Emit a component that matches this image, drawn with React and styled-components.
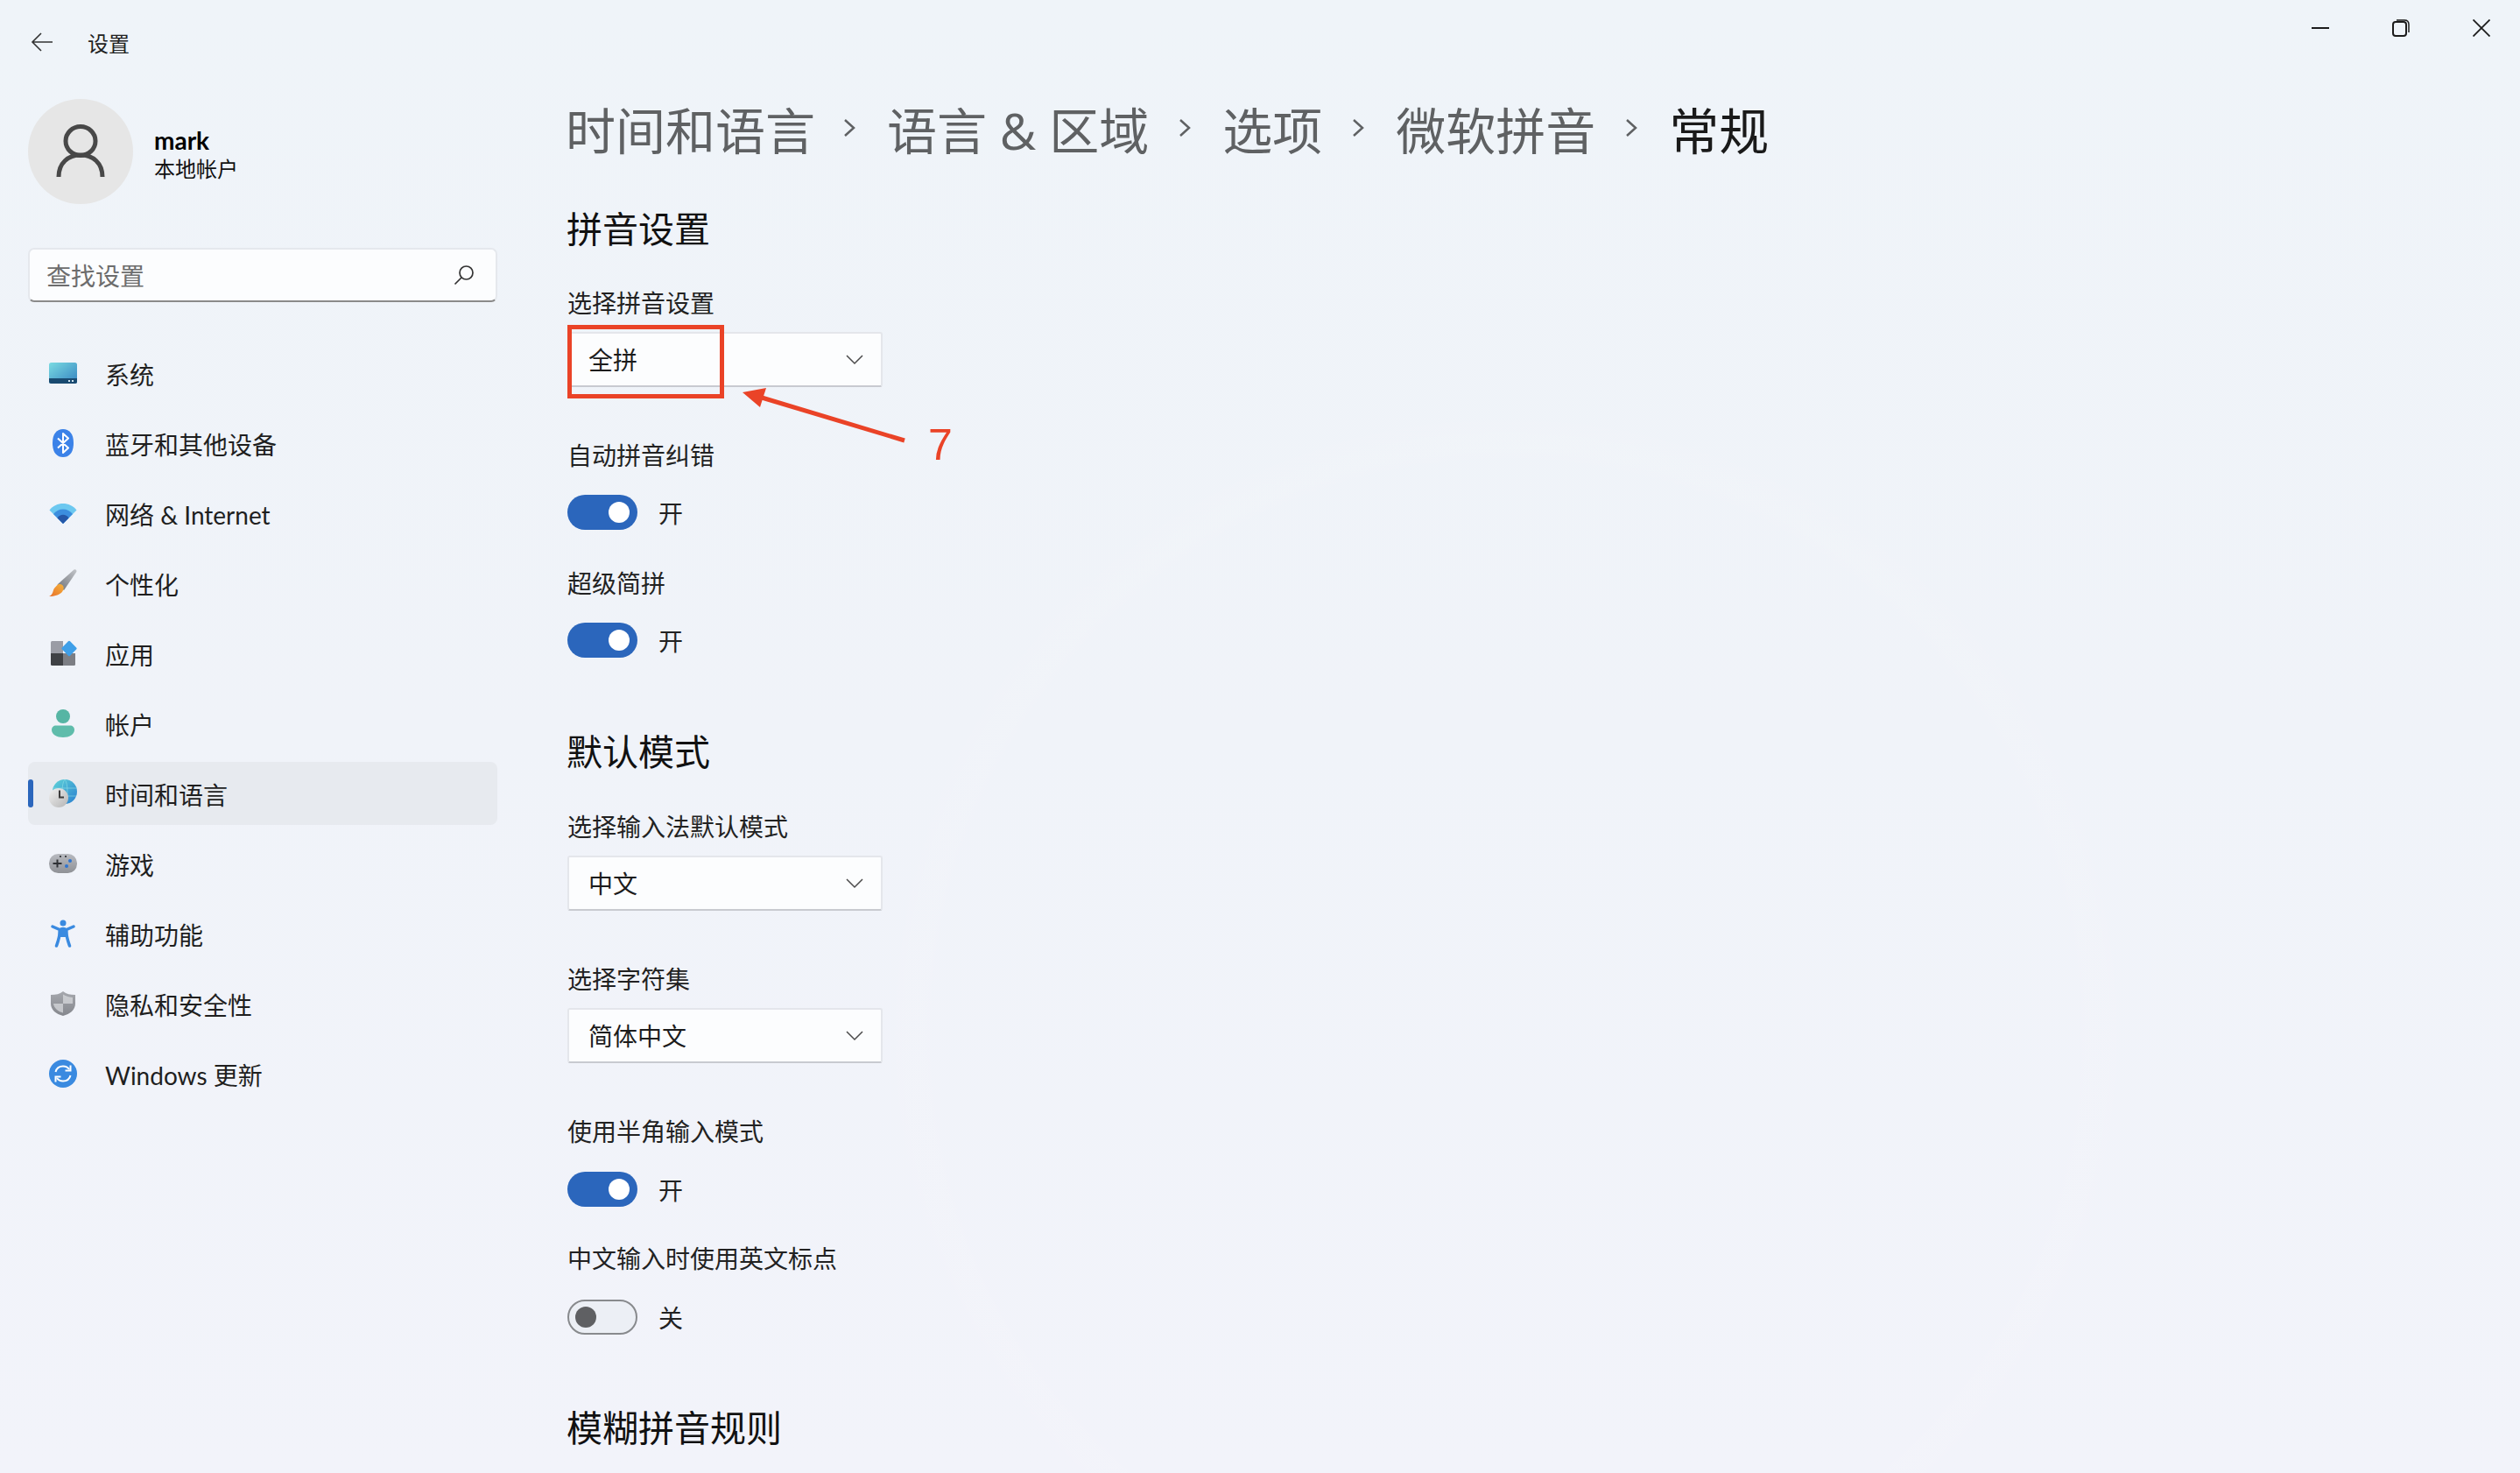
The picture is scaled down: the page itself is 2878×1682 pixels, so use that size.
import React from 'react';
import styled, { createGlobalStyle } from 'styled-components';

const GlobalStyle = createGlobalStyle`
  html, body {
    margin: 0;
    padding: 0;
  }
  body {
    font-family: "Open Sans", "Noto Sans CJK SC", sans-serif;
    color: #1c1c1c;
  }
`;

const navItems = [
  { key: 'system', label: '系统' },
  { key: 'bluetooth', label: '蓝牙和其他设备' },
  { key: 'network', label: '网络 & Internet' },
  { key: 'brush', label: '个性化' },
  { key: 'apps', label: '应用' },
  { key: 'account', label: '帐户' },
  { key: 'time', label: '时间和语言', active: true },
  { key: 'game', label: '游戏' },
  { key: 'access', label: '辅助功能' },
  { key: 'privacy', label: '隐私和安全性' },
  { key: 'update', label: 'Windows 更新' },
];

const crumbs = ['时间和语言', '语言 & 区域', '选项', '微软拼音'];

function NavIcon ({ name }) {
  switch (name) {
    case 'system':
      return (
        <svg width="32" height="32" viewBox="0 0 32 32">
          <defs>
            <linearGradient id="sysTop" x1="0" y1="0" x2="1" y2="1">
              <stop offset="0" stopColor="#7adbe2" />
              <stop offset="1" stopColor="#3583c0" />
            </linearGradient>
          </defs>
          <rect x="0" y="4" width="32" height="24" rx="2.5" fill="url(#sysTop)" />
          <path d="M0 22h32v3.5a2.5 2.5 0 0 1-2.5 2.5h-27A2.5 2.5 0 0 1 0 25.500z" fill="#194a70" />
          <rect x="22" y="24" width="2" height="2" fill="#cfe4ef" />
          <rect x="26" y="24" width="2" height="2" fill="#cfe4ef" />
        </svg>
      );
    case 'bluetooth':
      return (
        <svg width="32" height="32" viewBox="0 0 32 32">
          <path d="M16 0c7 0 12 5 12 16s-5 16-12 16S4 27 4 16 9 0 16 0z" fill="#3b82e8" />
          <path d="M10 10.500l12 11-6 5.500V5l6 5.500-12 11" fill="none" stroke="#fff" strokeWidth="2" strokeLinejoin="round" />
        </svg>
      );
    case 'network':
      return (
        <svg width="32" height="32" viewBox="0 0 32 32">
          <path d="M0.500 12.500C8 2.500 24 2.500 31.500 12.500L16 28z" fill="#6cc8f0" />
          <path d="M5 17C10 9.500 22 9.500 27 17L16 28z" fill="#3c8ede" />
          <path d="M9.500 21.500C12.500 16.500 19.500 16.500 22.500 21.500L16 28z" fill="#2557a7" />
        </svg>
      );
    case 'brush':
      return (
        <svg width="32" height="32" viewBox="0 0 32 32">
          <defs>
            <linearGradient id="brushHandle" x1="1" y1="0" x2="0" y2="1">
              <stop offset="0" stopColor="#c2c5ca" />
              <stop offset="1" stopColor="#6f7278" />
            </linearGradient>
            <linearGradient id="brushTip" x1="1" y1="0" x2="0" y2="1">
              <stop offset="0" stopColor="#f4b23c" />
              <stop offset="1" stopColor="#e8702a" />
            </linearGradient>
          </defs>
          <path d="M28.500 0.500c1.800-1 3.500.5 2.800 2.500L17 24l-7.500-6.500z" fill="url(#brushHandle)" />
          <path d="M9 18.500c2.500-2.500 6.500-1.500 7.500 1.500 1 4-2.500 11-16.500 11 3.500-1.500 4-4 5-7 .7-2.500 2.500-3.500 4-5.500z" fill="url(#brushTip)" />
        </svg>
      );
    case 'apps':
      return (
        <svg width="32" height="32" viewBox="0 0 32 32">
          <path d="M2 3.500A1.500 1.500 0 0 1 3.500 2H16v14H2z" fill="#9a9ca5" />
          <path d="M2 16h14v14H3.500A1.500 1.500 0 0 1 2 28.500z" fill="#3f4145" />
          <path d="M16 16h14v12.500a1.500 1.500 0 0 1-1.500 1.500H16z" fill="#7c7e84" />
          <rect x="16.500" y="4" width="13" height="13" rx="1.500" transform="rotate(45 23 10.500)" fill="#3f9fe8" />
        </svg>
      );
    case 'account':
      return (
        <svg width="32" height="32" viewBox="0 0 32 32">
          <circle cx="16" cy="8" r="8" fill="#56b5a4" />
          <path d="M3 23.500c0-3 2-5 5-5h16c3 0 5 2 5 5 0 5-6 8.500-13 8.500S3 28.500 3 23.500z" fill="#5fbcab" />
        </svg>
      );
    case 'time':
      return (
        <svg width="32" height="32" viewBox="0 0 32 32">
          <defs>
            <linearGradient id="globe" x1="0" y1="0" x2="1" y2="1">
              <stop offset="0" stopColor="#5fd4d8" />
              <stop offset="1" stopColor="#2a7fd0" />
            </linearGradient>
            <linearGradient id="clock" x1="0" y1="0" x2="1" y2="1">
              <stop offset="0" stopColor="#f2f2f2" />
              <stop offset="1" stopColor="#b4b4b4" />
            </linearGradient>
          </defs>
          <circle cx="18" cy="14" r="14" fill="url(#globe)" />
          <path d="M18 0c-4 4-4 24 0 28M18 0c4 4 4 24 0 28M4 10h28M5 19h26" fill="none" stroke="#8fdfe6" strokeWidth="1" opacity=".6" />
          <circle cx="11" cy="21" r="11" fill="url(#clock)" />
          <path d="M12 12.500V20.500h5" fill="none" stroke="#3c3c3c" strokeWidth="2" />
        </svg>
      );
    case 'game':
      return (
        <svg width="32" height="32" viewBox="0 0 32 32">
          <defs>
            <linearGradient id="pad" x1="0" y1="0" x2="0" y2="1">
              <stop offset="0" stopColor="#b8bac0" />
              <stop offset="1" stopColor="#8f9196" />
            </linearGradient>
          </defs>
          <rect x="0" y="5" width="32" height="22" rx="10.500" fill="url(#pad)" />
          <path d="M4.500 16h10M9.500 11.500v9" stroke="#303236" strokeWidth="2" />
          <circle cx="24" cy="13" r="2" fill="#2f74d0" />
          <circle cx="20" cy="19" r="2" fill="#2f74d0" />
          <rect x="12" y="7" width="2" height="2" fill="#44464a" />
          <rect x="18" y="7" width="2" height="2" fill="#44464a" />
        </svg>
      );
    case 'access':
      return (
        <svg width="32" height="32" viewBox="0 0 32 32">
          <circle cx="16" cy="4" r="3.500" fill="#3a8ae0" />
          <path d="M4 8l8 3.500h8L28 8" fill="none" stroke="#3a8ae0" strokeWidth="3.500" strokeLinecap="round" strokeLinejoin="round" />
          <path d="M16 10.500c-3 0-4 2-4 5 0 5-2 10-3.500 14.500M16 10.500c3 0 4 2 4 5 0 5 2 10 3.500 14.500" fill="none" stroke="#3a8ae0" strokeWidth="3.500" strokeLinecap="round" />
          <path d="M12.500 11h7v9h-7z" fill="#3a8ae0" />
        </svg>
      );
    case 'privacy':
      return (
        <svg width="32" height="32" viewBox="0 0 32 32">
          <defs>
            <linearGradient id="shield" x1="0" y1="0" x2="0" y2="1">
              <stop offset="0" stopColor="#a6a8ae" />
              <stop offset="1" stopColor="#85878d" />
            </linearGradient>
          </defs>
          <path d="M16 2c4 3 8 4 14 4v10c0 7-6 12-14 14C8 28 2 23 2 16V6c6 0 10-1 14-4z" fill="url(#shield)" />
          <path d="M16 5.500c3 2 6 3 11 3.500v7H16zM16 16H5c.5 5 5 9 11 10.500z" fill="#d7d8dc" opacity=".75" />
        </svg>
      );
    default:
      return (
        <svg width="32" height="32" viewBox="0 0 32 32">
          <circle cx="16" cy="16" r="16" fill="#3a8ae0" />
          <path d="M7.500 14c1-4 4.500-6.500 8.500-6.500 3 0 5.500 1.300 7 3.500M24.500 18c-1 4-4.500 6.500-8.500 6.500-3 0-5.500-1.300-7-3.500" fill="none" stroke="#fff" strokeWidth="2" />
          <path d="M24.500 6.500v6h-6M7.500 25.500v-6h6" fill="none" stroke="#fff" strokeWidth="2" />
        </svg>
      );
  }
}

function Chevron () {
  return (
    <svg width="16" height="22" viewBox="0 0 16 22">
      <path d="M2 2l10 9-10 9" fill="none" stroke="#5f6163" strokeWidth="2.500" />
    </svg>
  );
}

function Dropdown ({ value }) {
  return (
    <Select>
      {value}
      <svg width="20" height="12" viewBox="0 0 20 12">
        <path d="M1 1l9 9 9-9" fill="none" stroke="#4a4a4a" strokeWidth="1.500" />
      </svg>
    </Select>
  );
}

function Toggle ({ on }) {
  return (
    <ToggleRow>
      <Track $on={on}><Knob $on={on} /></Track>
      <ToggleText>{on ? '开' : '关'}</ToggleText>
    </ToggleRow>
  );
}

export default function App () {
  return (
    <Page>
      <GlobalStyle />
      <Sidebar>
        <BackRow>
          <svg width="26" height="24" viewBox="0 0 26 24">
            <path d="M25 12H2M12 2L2 12l10 10" fill="none" stroke="#333" strokeWidth="1.600" />
          </svg>
          <span>设置</span>
        </BackRow>
        <Profile>
          <Avatar>
            <svg width="56" height="62" viewBox="0 0 56 62">
              <ellipse cx="28" cy="19" rx="17" ry="16.500" fill="none" stroke="#484848" strokeWidth="5" />
              <path d="M3 60c0-16 11-25 25-25s25 9 25 25" fill="none" stroke="#484848" strokeWidth="5" />
            </svg>
          </Avatar>
          <ProfileText>
            <ProfileName>mark</ProfileName>
            <ProfileKind>本地帐户</ProfileKind>
          </ProfileText>
        </Profile>
        <Search>
          <span>查找设置</span>
          <svg width="24" height="24" viewBox="0 0 24 24">
            <circle cx="14.500" cy="9.500" r="7.500" fill="none" stroke="#333" strokeWidth="1.700" />
            <path d="M9 15l-7.500 7.500" fill="none" stroke="#333" strokeWidth="1.700" />
          </svg>
        </Search>
        <Nav>
          {navItems.map((item) => (
            <NavRow key={item.key} $active={item.active}>
              {item.active && <Indicator />}
              <NavIconBox><NavIcon name={item.key} /></NavIconBox>
              <NavLabel>{item.label}</NavLabel>
            </NavRow>
          ))}
        </Nav>
      </Sidebar>

      <Main>
        <Breadcrumb>
          {crumbs.map((crumb) => (
            <React.Fragment key={crumb}>
              <span>{crumb}</span>
              <Chevron />
            </React.Fragment>
          ))}
          <Current>常规</Current>
        </Breadcrumb>

        <SectionTitle $top={38}>拼音设置</SectionTitle>
        <Field $top={36} $gap={13}>
          <span>选择拼音设置</span>
          <AnnotatedSelect>
            <Dropdown value="全拼" />
            <RedBox />
            <ArrowMark width="200" height="70" viewBox="0 0 200 70">
              <path d="M185 58L22 9" fill="none" stroke="#ea4327" strokeWidth="5" />
              <path d="M0 3L27 -2L20 20z" fill="#ea4327" />
            </ArrowMark>
            <StepNumber>7</StepNumber>
          </AnnotatedSelect>
        </Field>
        <Field $top={58} $gap={25}>
          <span>自动拼音纠错</span>
          <Toggle on />
        </Field>
        <Field $top={41} $gap={25}>
          <span>超级简拼</span>
          <Toggle on />
        </Field>

        <SectionTitle $top={80}>默认模式</SectionTitle>
        <Field $top={37} $gap={13}>
          <span>选择输入法默认模式</span>
          <Dropdown value="中文" />
        </Field>
        <Field $top={58} $gap={13}>
          <span>选择字符集</span>
          <Dropdown value="简体中文" />
        </Field>
        <Field $top={58} $gap={26}>
          <span>使用半角输入模式</span>
          <Toggle on />
        </Field>
        <Field $top={39} $gap={27}>
          <span>中文输入时使用英文标点</span>
          <Toggle />
        </Field>

        <SectionTitle $top={79}>模糊拼音规则</SectionTitle>
      </Main>

      <WindowControls>
        <svg width="20" height="20" viewBox="0 0 20 20">
          <path d="M0 10h20" stroke="#1c1c1c" strokeWidth="2" />
        </svg>
        <svg width="20" height="20" viewBox="0 0 20 20">
          <rect x="1" y="3" width="15" height="16" rx="3" fill="none" stroke="#1c1c1c" strokeWidth="2" />
          <path d="M5 1h9c3 0 5 2 5 5v9" fill="none" stroke="#1c1c1c" strokeWidth="1.500" />
        </svg>
        <svg width="20" height="20" viewBox="0 0 20 20">
          <path d="M0.500 0.500l19 19M19.500 0.500l-19 19" stroke="#1c1c1c" strokeWidth="1.800" />
        </svg>
      </WindowControls>
    </Page>
  );
}

const Page = styled.div`
  display: flex;
  width: 2878px;
  height: 1682px;
  overflow: hidden;
  background:
    radial-gradient(circle at 1720px 1180px, transparent 640px, rgba(255, 255, 255, 0.06) 670px, transparent 740px),
    linear-gradient(180deg, #eff4f9 0%, #f0f3f9 50%, #f2f3fa 100%);
`;

const Sidebar = styled.aside`
  display: flex;
  flex-direction: column;
  flex: 0 0 648px;
  box-sizing: border-box;
  padding-left: 32px;
`;

const BackRow = styled.div`
  display: flex;
  align-items: center;
  gap: 39px;
  height: 96px;
  padding-left: 3px;
  font-size: 24px;
  color: #222;
`;

const Profile = styled.div`
  display: flex;
  align-items: center;
  gap: 24px;
  margin-top: 17px;
`;

const Avatar = styled.div`
  display: flex;
  align-items: center;
  justify-content: center;
  width: 120px;
  height: 120px;
  border-radius: 50%;
  background: #e6e6e6;
`;

const ProfileText = styled.div`
  display: flex;
  flex-direction: column;
  padding-top: 5px;
`;

const ProfileName = styled.div`
  font-family: "Lato", "Noto Sans CJK SC", sans-serif;
  font-size: 28px;
  line-height: 34px;
  font-weight: 700;
  color: #000;
`;

const ProfileKind = styled.div`
  font-size: 24px;
  line-height: 32px;
  color: #111;
`;

const Search = styled.div`
  display: flex;
  align-items: center;
  justify-content: space-between;
  box-sizing: border-box;
  width: 536px;
  height: 62px;
  margin-top: 50px;
  padding: 0 24px 0 19px;
  border: 2px solid #e5e8ed;
  border-bottom: 2px solid #8a8a8a;
  border-radius: 7px;
  background: #fcfdfe;
  font-size: 28px;
  color: #6d6d6d;
`;

const Nav = styled.nav`
  display: flex;
  flex-direction: column;
  gap: 8px;
  width: 536px;
  margin-top: 45px;
`;

const NavRow = styled.div`
  position: relative;
  display: flex;
  align-items: center;
  gap: 32px;
  height: 72px;
  padding-left: 24px;
  border-radius: 8px;
  background: ${({ $active }) => ($active ? '#e7eaef' : 'transparent')};
  color: #1f1f1f;
`;

const NavLabel = styled.span`
  padding-top: 1px;
  font-family: "Lato", "Noto Sans CJK SC", sans-serif;
  font-size: 28px;
`;

const NavIconBox = styled.div`
  display: flex;
  width: 32px;
  height: 32px;
`;

const Indicator = styled.div`
  position: absolute;
  left: 0;
  top: 20px;
  width: 6px;
  height: 32px;
  border-radius: 3px;
  background: #2b66bc;
`;

const Main = styled.main`
  flex: 1;
  display: flex;
  flex-direction: column;
  align-items: flex-start;
  padding-top: 96px;
`;

const Breadcrumb = styled.div`
  display: flex;
  align-items: center;
  gap: 34px;
  height: 100px;
  margin-left: -2px;
  font-size: 57px;
  color: #5f6163;

  span:first-child {
    margin-right: -2px;
  }
`;

const Current = styled.span`
  color: #1a1a1a;
`;

const SectionTitle = styled.h2`
  margin: ${({ $top }) => $top}px 0 0 -1px;
  height: 56px;
  font-size: 41px;
  line-height: 55px;
  font-weight: 400;
  color: #111;
`;

const Field = styled.div`
  display: flex;
  flex-direction: column;
  align-items: flex-start;
  gap: ${({ $gap }) => $gap}px;
  margin-top: ${({ $top }) => $top}px;
  font-size: 28px;
  line-height: 40px;
  color: #222;
`;

const Select = styled.div`
  display: flex;
  align-items: center;
  justify-content: space-between;
  box-sizing: border-box;
  width: 360px;
  height: 63px;
  padding: 0 20px 0 22px;
  border: 2px solid #e4e6eb;
  border-bottom-color: #c8cad0;
  border-radius: 3px;
  background: #fcfdfe;
  color: #1c1c1c;
`;

const AnnotatedSelect = styled.div`
  position: relative;
`;

const RedBox = styled.div`
  position: absolute;
  left: 0;
  top: -8px;
  box-sizing: border-box;
  width: 179px;
  height: 84px;
  border: 5px solid #ea4327;
`;

const ArrowMark = styled.svg`
  position: absolute;
  left: 200px;
  top: 66px;
  overflow: visible;
`;

const StepNumber = styled.span`
  position: absolute;
  left: 412px;
  top: 99px;
  font-family: "Liberation Sans", sans-serif;
  font-size: 50px;
  line-height: 60px;
  color: #ea4327;
`;

const ToggleRow = styled.div`
  display: flex;
  align-items: center;
  gap: 24px;
  height: 40px;
  color: #222;
`;

const ToggleText = styled.span`
  padding-top: 2px;
`;

const Track = styled.div`
  display: flex;
  align-items: center;
  justify-content: ${({ $on }) => ($on ? 'flex-end' : 'flex-start')};
  box-sizing: border-box;
  width: 80px;
  height: 40px;
  padding: 0 ${({ $on }) => ($on ? '9px' : '7px')};
  border: ${({ $on }) => ($on ? 'none' : '2px solid #888a8d')};
  border-radius: 20px;
  background: ${({ $on }) => ($on ? '#2b66bc' : '#eceff5')};
`;

const Knob = styled.div`
  width: 24px;
  height: 24px;
  border-radius: 50%;
  background: ${({ $on }) => ($on ? '#fff' : '#5f6063')};
`;

const WindowControls = styled.div`
  display: flex;
  gap: 72px;
  height: 20px;
  padding: 22px 34px 0 0;
`;
